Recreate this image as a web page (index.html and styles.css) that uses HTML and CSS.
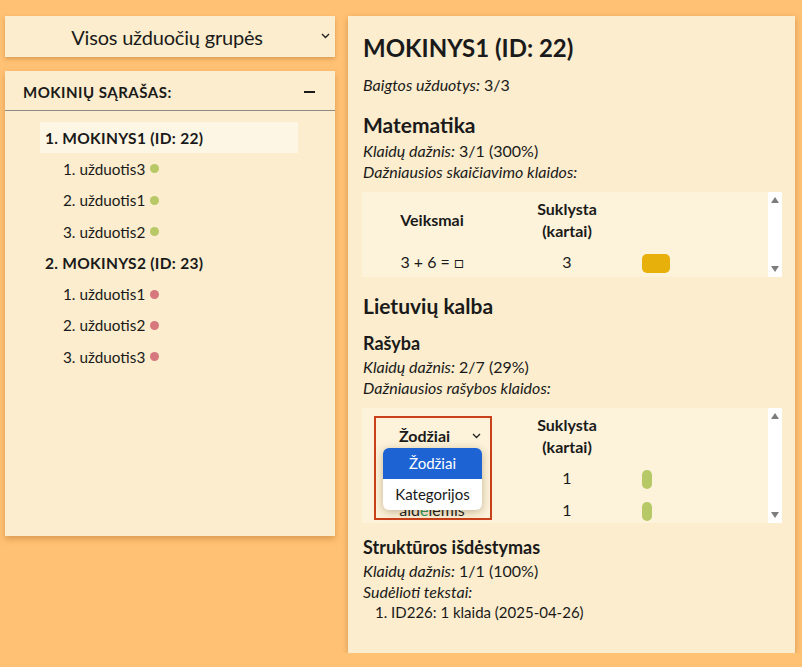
FILE: index.html
```html
<!DOCTYPE html>
<html lang="lt">
<head>
<meta charset="utf-8">
<title>Mokinių sąrašas</title>
<link rel="stylesheet" href="styles.css">
</head>
<body>
<div class="page">
  <aside class="sidebar">
    <div class="group-select">
      <span class="group-label">Visos užduočių grupės</span>
      <svg class="chev" width="9" height="6" viewBox="0 0 9 6"><polyline points="1,1 4.5,4.5 8,1" fill="none" stroke="#222" stroke-width="1.4"/></svg>
    </div>
    <section class="students">
      <header class="students-head">
        <span>MOKINIŲ SĄRAŠAS:</span>
        <span class="minus"></span>
      </header>
      <ul class="student-list">
        <li class="student active">1. MOKINYS1 (ID: 22)</li>
        <li class="task">1. užduotis3<span class="dot ok"></span></li>
        <li class="task">2. užduotis1<span class="dot ok"></span></li>
        <li class="task">3. užduotis2<span class="dot ok"></span></li>
        <li class="student">2. MOKINYS2 (ID: 23)</li>
        <li class="task">1. užduotis1<span class="dot bad"></span></li>
        <li class="task">2. užduotis2<span class="dot bad"></span></li>
        <li class="task">3. užduotis3<span class="dot bad"></span></li>
      </ul>
    </section>
  </aside>

  <main class="details">
    <h1 class="title">MOKINYS1 (ID: 22)</h1>
    <p class="line done"><em>Baigtos užduotys:</em> 3/3</p>

    <h2 class="subject">Matematika</h2>
    <p class="line"><em>Klaidų dažnis:</em> 3/1 (300%)</p>
    <p class="line"><em>Dažniausios skaičiavimo klaidos:</em></p>
    <div class="tbox tbox1">
      <div class="tscroll">
        <table class="errtable">
          <thead>
            <tr><th class="c1">Veiksmai</th><th class="c2">Suklysta<br>(kartai)</th><th class="c3"></th></tr>
          </thead>
          <tbody>
            <tr><td class="c1">3 + 6 = □</td><td class="c2">3</td><td class="c3"><span class="bar yellow"></span></td></tr>
          </tbody>
        </table>
      </div>
      <div class="sbar"><span class="arr up"></span><span class="arr down"></span></div>
    </div>

    <h2 class="subject lt">Lietuvių kalba</h2>
    <h3 class="topic">Rašyba</h3>
    <p class="line"><em>Klaidų dažnis:</em> 2/7 (29%)</p>
    <p class="line"><em>Dažniausios rašybos klaidos:</em></p>
    <div class="tbox tbox2">
      <div class="tscroll">
        <table class="errtable">
          <thead>
            <tr><th class="c1"><span class="hsel">Žodžiai<svg class="chev2" width="9" height="6" viewBox="0 0 9 6"><polyline points="1,1 4.5,4.5 8,1" fill="none" stroke="#222" stroke-width="1.3"/></svg></span></th><th class="c2">Suklysta<br>(kartai)</th><th class="c3"></th></tr>
          </thead>
          <tbody>
            <tr><td class="c1"></td><td class="c2">1</td><td class="c3"><span class="bar green"></span></td></tr>
            <tr><td class="c1 under">aid<span class="hl">e</span>lemis</td><td class="c2">1</td><td class="c3"><span class="bar green"></span></td></tr>
          </tbody>
        </table>
      </div>
      <div class="sbar"><span class="arr up"></span><span class="arr down"></span></div>
      <div class="focus-ring"></div>
      <ul class="menu">
        <li class="opt selected">Žodžiai</li>
        <li class="opt">Kategorijos</li>
      </ul>
    </div>

    <h3 class="topic st">Struktūros išdėstymas</h3>
    <p class="line"><em>Klaidų dažnis:</em> 1/1 (100%)</p>
    <p class="line"><em>Sudėlioti tekstai:</em></p>
    <ol class="texts">
      <li>1. ID226: 1 klaida (2025-04-26)</li>
    </ol>
  </main>
</div>
</body>
</html>
```

FILE: styles.css
```css
* { box-sizing: border-box; }
html, body { margin: 0; padding: 0; }
body {
  background: #ffc174;
  font-family: "Lato", "Noto Sans", sans-serif;
  color: #1a1a1a;
  font-size: 15px;
}
.page {
  display: flex;
  align-items: flex-start;
  gap: 13px;
  padding: 16px 7px 0 5px;
}
.sidebar {
  width: 330px;
  display: flex;
  flex-direction: column;
  gap: 14px;
}
.group-select {
  height: 41px;
  background: #fbedcd;
  box-shadow: 0 2px 4px rgba(150, 90, 20, 0.35);
  display: flex;
  align-items: center;
  justify-content: center;
  position: relative;
  font-size: 20px;
}
.group-label { margin-left: -6px; letter-spacing: -0.2px; }
.chev { position: absolute; right: 5px; top: 17px; }
.students {
  height: 465px;
  background: #fbedcd;
  box-shadow: 0 3px 6px rgba(150, 90, 20, 0.35);
}
.students-head {
  height: 40px;
  border-bottom: 1px solid #8d8a83;
  display: flex;
  align-items: center;
  justify-content: space-between;
  padding: 2px 20px 0 18px;
  font-weight: 700;
  font-size: 15px;
  letter-spacing: 0.5px;
}
.minus { width: 11px; height: 2px; background: #1a1a1a; }
.student-list {
  list-style: none;
  margin: 11px 0 0 35px;
  padding: 0;
  width: 258px;
}
.student-list li {
  height: 31.3px;
  display: flex;
  align-items: center;
}
.student { font-weight: 700; padding-left: 5px; font-size: 15.5px; letter-spacing: 0.3px; }
.student.active { background: #fdf6e4; }
.task { padding-left: 23px; font-size: 15.3px; }
.dot {
  width: 9px; height: 9px; border-radius: 50%;
  margin-left: 5px;
  display: inline-block;
}
.dot.ok { background: #b8c866; }
.dot.bad { background: #d6787d; }

.details {
  width: 447px;
  background: #fbedcd;
  box-shadow: 0 2px 6px rgba(150, 90, 20, 0.4);
  padding: 16px 14px 30px 15px;
  font-size: 16px;
}
.title {
  margin: 0;
  font-size: 24px;
  line-height: 32px;
  font-weight: 700;
}
.line { margin: 0; line-height: 21px; }
.line em { font-style: italic; }
.done { margin-top: 10px; }
.subject {
  margin: 16px 0 1px;
  font-size: 21px;
  line-height: 28px;
  font-weight: 700;
}
.subject.lt { margin-top: 15px; }
.topic {
  margin: 11px 0 1px;
  font-size: 18px;
  line-height: 24px;
  font-weight: 700;
}
.topic.st { margin-top: 12px; }

.tbox {
  position: relative;
  display: flex;
  margin: 10px 0 0 -1px;
  width: 420px;
  background: #fdf3da;
}
.tbox1 { height: 85px; }
.tbox2 { height: 115px; }
.tscroll { flex: 1; overflow: hidden; padding-top: 1px; }
.errtable { border-collapse: collapse; width: 100%; }
.errtable th, .errtable td {
  padding: 5px 0 4px;
  height: 31px;
  line-height: 22px;
  text-align: center;
  vertical-align: middle;
}
.errtable th { font-weight: 700; }
.c1 { width: 140px; }
.c2 { width: 130px; }
.errtable .c3 { text-align: left; padding-left: 10px; }
.bar { display: inline-block; vertical-align: middle; border-radius: 5px; }
.bar.yellow { width: 28px; height: 19px; background: #e7b00a; }
.bar.green { width: 10px; height: 19px; background: #b7c866; }
.hl { color: #2a9a5a; }
.hsel { display: inline-flex; align-items: center; padding-left: 16px; }
.chev2 { margin-left: 22px; }

.sbar {
  width: 14px;
  background: #fff;
  display: flex;
  flex-direction: column;
  justify-content: space-between;
  align-items: center;
  padding: 5px 0;
}
.arr { width: 0; height: 0; border-left: 4px solid transparent; border-right: 4px solid transparent; }
.arr.up { border-bottom: 6px solid #7d7d7d; }
.arr.down { border-top: 6px solid #7d7d7d; }

.focus-ring {
  position: absolute;
  left: 12px; top: 8px;
  width: 118px; height: 104px;
  border: 2px solid #c9401a;
  pointer-events: none;
}
.menu {
  position: absolute;
  left: 21px; top: 40px;
  width: 99px;
  margin: 0; padding: 0;
  list-style: none;
  background: #fff;
  border-radius: 6px;
  overflow: hidden;
  font-size: 15px;
  box-shadow: 0 2px 10px rgba(90, 60, 20, 0.35);
}
.opt { height: 31px; line-height: 31px; text-align: center; }
.opt.selected { background: #1d63d3; color: #fff; }

.texts { list-style: none; margin: 0; padding: 0 0 0 12px; line-height: 21px; font-size: 15px; }
```
